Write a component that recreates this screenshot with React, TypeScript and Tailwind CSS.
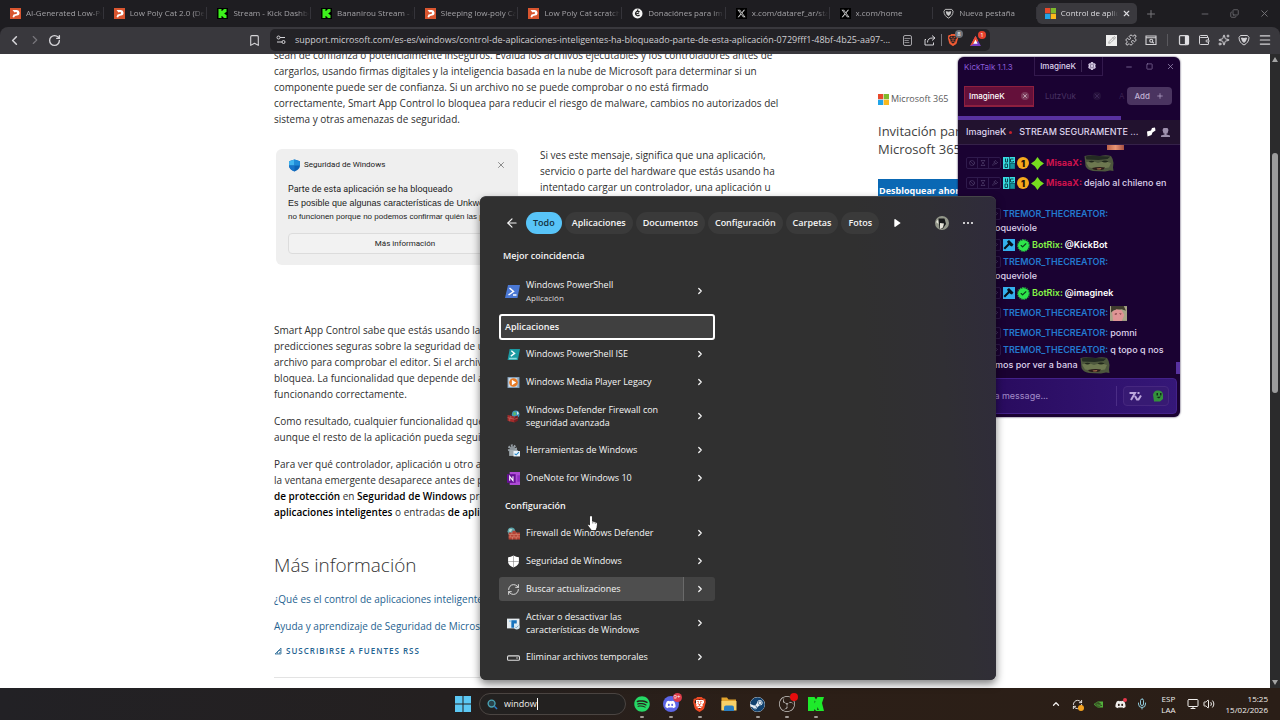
import type { ReactNode } from "react";
import {
  ArrowLeft, Bookmark, ChevronLeft, ChevronRight, ChevronUp, Copy, Menu, Mic, Minus, PanelRight, Pencil,
  Plus, Puzzle, RefreshCw, RotateCw, Settings, Sparkles, Square, Text, Volume2, Wallet, X, Ban,
  Hourglass, Gavel, Check, Monitor,
} from "lucide-react";
import { FaDiscord, FaSpotify, FaSteam, FaXTwitter } from "react-icons/fa6";
import { SiBrave, SiKick, SiNvidia, SiObsstudio } from "react-icons/si";

const segoe = "font-['Open_Sans','Noto_Sans',sans-serif]";

function MicrosoftLogo() {
  return (
    <svg viewBox="0 0 22 22" className="size-[11px] shrink-0" aria-hidden="true">
      <path fill="#e8492b" d="M0 0h10.5v10.5H0z" />
      <path fill="#7eba2c" d="M11.500 0H22v10.5H11.500z" />
      <path fill="#21a4e8" d="M0 11.500h10.5V22H0z" />
      <path fill="#fbb91c" d="M11.500 11.500H22V22H11.500z" />
    </svg>
  );
}

function CultsIcon() {
  return (
    <svg viewBox="0 0 22 22" className="size-[11px] shrink-0" aria-hidden="true">
      <path fill="#d9552f" d="M0 0h22v22H0z" />
      <path fill="#fff" d="M5 4h8a5.500 5.500 0 0 1 1 11l-4 1-2 3-3-1 2-5 5-1a2 2 0 0 0 0-4L9 9z" />
    </svg>
  );
}

function KickIcon() {
  return (
    <span className="grid size-[11px] shrink-0 place-items-center bg-black text-[#3df01c]">
      <SiKick className="size-[9px]" />
    </span>
  );
}

function DonateIcon() {
  return (
    <svg viewBox="0 0 22 22" className="size-[11px] shrink-0" aria-hidden="true">
      <circle cx="11" cy="11" r="10" fill="#f4f4f4" />
      <path d="M15 8a4.500 4.500 0 1 0 0 6M8 12l6-2M12 3l-1 3" fill="none" stroke="#222" strokeWidth="2.500" />
    </svg>
  );
}

function XIcon() {
  return (
    <span className="grid size-[11px] shrink-0 place-items-center bg-black text-[#d5d5d5]">
      <FaXTwitter className="size-[9px]" />
    </span>
  );
}

function ShieldIcon({ className }: { className: string }) {
  return (
    <svg viewBox="0 0 24 24" className={className} fill="none" stroke="currentColor" strokeWidth="2" aria-hidden="true">
      <path d="M5 3h14l3 4c0 7-4 12-10 15C6 19 2 14 2 7z" />
      <path d="M7 8l5 1 5-1-2 6-3 3-3-3z" fill="currentColor" />
    </svg>
  );
}

const tabs: { label: string; icon: ReactNode }[] = [
  { label: "AI-Generated Low-Poly", icon: <CultsIcon /> },
  { label: "Low Poly Cat 2.0 (Decor)", icon: <CultsIcon /> },
  { label: "Stream - Kick Dashboard", icon: <KickIcon /> },
  { label: "Bananirou Stream - Kick", icon: <KickIcon /> },
  { label: "Sleeping low-poly Cat", icon: <CultsIcon /> },
  { label: "Low Poly Cat scratching", icon: <CultsIcon /> },
  { label: "Donaciónes para imaginek", icon: <DonateIcon /> },
  { label: "x.com/dataref_ar/status", icon: <XIcon /> },
  { label: "x.com/home", icon: <XIcon /> },
  { label: "Nueva pestaña", icon: <ShieldIcon className="size-[11px] shrink-0 text-[#c9c9c9]" /> },
];

const fade = "[mask-image:linear-gradient(to_right,black_85%,transparent_100%)]";

function TabBar() {
  return (
    <header className="flex h-[27px] shrink-0 items-center bg-[#1e1d21] text-[8px] text-[#a3a2a6]">
      <div className="flex w-[81%] shrink-0">
        {tabs.map((tab) => (
          <button key={tab.label} className="flex h-4 min-w-0 flex-1 items-center gap-[5px] pb-px pl-[10px]">
            {tab.icon}
            <span className={`-mr-1 min-w-0 flex-1 overflow-hidden whitespace-nowrap text-left ${fade}`}>{tab.label}</span>
            <span className="h-3 w-px bg-[#35343a]" />
          </button>
        ))}
      </div>
      <div className="flex h-[21px] w-[100px] shrink-0 items-center rounded-[5px] bg-[#3a393e] pb-px pl-2 pr-[6px] text-[#dddce0]">
        <MicrosoftLogo />
        <button className={`ml-[5px] min-w-0 flex-1 overflow-hidden whitespace-nowrap text-left ${fade}`}>
          Control de aplicaciones
        </button>
        <button aria-label="Cerrar pestaña" className="ml-1"><X className="size-[9px]" strokeWidth={3} /></button>
      </div>
      <button aria-label="Nueva pestaña" className="ml-2 text-[#77767b]"><Plus className="size-3" /></button>
      <div className="ml-auto flex items-center gap-5 pr-[10px] text-[#77767b]">
        <button aria-label="Minimizar"><Minus className="size-[10px]" /></button>
        <button aria-label="Restaurar"><Copy className="size-[9px] -scale-x-100 rotate-180" /></button>
        <button aria-label="Cerrar"><X className="size-[11px]" /></button>
      </div>
    </header>
  );
}

function Toolbar() {
  return (
    <div className="shrink-0 bg-[#1e1d21]">
      <nav className="flex h-[27px] items-center rounded-t-lg bg-[#39383d] pb-px text-[#d5d4d8]">
        <div className="flex items-center gap-[6px] pl-[7px]">
          <button aria-label="Atrás"><ChevronLeft className="size-[15px]" strokeWidth={2.500} /></button>
          <button aria-label="Adelante" className="text-[#77767b]"><ChevronRight className="size-[14px]" /></button>
          <button aria-label="Recargar"><RotateCw className="size-[13px]" strokeWidth={2.500} /></button>
        </div>
        <button aria-label="Guardar marcador" className="ml-[187px]"><Bookmark className="size-[13px]" /></button>
        <div className="ml-[9px] flex h-[22px] w-[720px] shrink items-center rounded-[5px] bg-[#232226] pl-[6px] pr-2">
          <svg viewBox="0 0 20 20" className="size-[10px] shrink-0" fill="none" stroke="currentColor" strokeWidth="2" aria-hidden="true">
            <circle cx="5" cy="5" r="3" /><circle cx="15" cy="14" r="3" /><path d="M8 5h10M2 14h10" />
          </svg>
          <input
            aria-label="Dirección"
            className="ml-[9px] min-w-0 flex-1 truncate bg-transparent text-[9px] text-[#d0cfd3] outline-none"
            defaultValue="support.microsoft.com/es-es/windows/control-de-aplicaciones-inteligentes-ha-bloqueado-parte-de-esta-aplicación-0729fff1-48bf-4b25-aa97-..."
          />
          <button aria-label="Modo lectura" className="ml-2 rounded-[2px] border border-[#a5a4a8]">
            <Text className="h-[9px] w-[7px]" />
          </button>
          <button aria-label="Compartir" className="ml-3">
            <svg viewBox="0 0 24 24" className="size-3" fill="none" stroke="currentColor" strokeWidth="2">
              <path d="M4 11H2v11h17v-5M7 17q0-9 10-9h4M16 3l6 5-6 5" />
            </svg>
          </button>
          <span className="mx-[5px] h-3 w-px bg-[#77767b]" />
          <button aria-label="Brave Shields" className="relative text-[#ee5a33]">
            <SiBrave className="size-[12px]" />
            <span className="absolute -right-1 -top-1 size-2 rounded-full bg-[#6c7077] text-center text-[6px] leading-[8px] text-white">8</span>
          </button>
          <button aria-label="Brave Rewards" className="relative ml-[10px]">
            <svg viewBox="0 0 24 24" className="size-[13px]">
              <path d="M12 3 22 22H2z" fill="#7a3cc9" />
              <path d="M12 3 17 13 2 22z" fill="#ee4b2b" />
              <path d="m12 10 4 8H8z" fill="#fff" />
            </svg>
            <span className="absolute -right-1 -top-[3px] size-2 rounded-full bg-[#e5402d] text-center text-[6px] leading-[8px] text-white">1</span>
          </button>
        </div>
        <div className="ml-auto flex items-center gap-2 pr-2">
          <button aria-label="Pluma" className="grid size-[11px] place-items-center bg-[#efefef] text-[#8c8c8c]"><Pencil className="size-2" /></button>
          <button aria-label="Extensiones"><Puzzle className="size-3" /></button>
          <button aria-label="Buscar pestañas">
            <svg viewBox="0 0 24 24" className="size-3" fill="none" stroke="currentColor" strokeWidth="2.200">
              <path d="M2 4h20v17H2zM2 7.500h20M15 16l2.500 2.500" /><circle cx="12.500" cy="13.500" r="3" />
            </svg>
          </button>
          <span className="mx-[2px] h-3 w-px bg-[#5a595e]" />
          <button aria-label="Barra lateral" className="relative">
            <PanelRight className="size-3" strokeWidth={2.500} />
            <span className="absolute bottom-[2px] right-px top-[2px] w-1 bg-[#e2e1e5]" />
          </button>
          <button aria-label="Cartera"><Wallet className="size-3" /></button>
          <button aria-label="Leo"><Sparkles className="size-3" /></button>
          <button aria-label="VPN"><ShieldIcon className="size-3" /></button>
          <button aria-label="Menú"><Menu className="size-[14px]" /></button>
        </div>
      </nav>
    </div>
  );
}

function Lines({ rows }: { rows: ReactNode[] }) {
  return (
    <p className="whitespace-nowrap text-[10px] leading-4 text-[#2f2f2f] [&_b]:font-semibold [&_b]:text-black">
      {rows.map((row, i) => (
        <span key={i} className="block">{row}</span>
      ))}
    </p>
  );
}

function BlockedCard() {
  return (
    <figure className="ml-[2px] flex h-[116px] w-[242px] flex-col overflow-hidden rounded-md bg-[#efefef] px-3 pt-2 font-['Liberation_Sans',sans-serif] text-[8px] text-[#222]">
      <div className="flex h-4 items-center">
        <svg viewBox="0 0 24 24" className="size-[13px]" aria-hidden="true">
          <path d="M12 1 22 4v8c0 6-5 9-10 11C7 21 2 18 2 12V4z" fill="#0c62b4" />
          <path d="M12 1v11H2V4z" fill="#41b5ee" /><path d="M12 1v11h10V4z" fill="#1f8bd8" /><path d="M12 12v11C7 21 2 18 2 12z" fill="#1874c8" />
        </svg>
        <span className="ml-[3px] font-['Roboto',sans-serif]">Seguridad de Windows</span>
        <X className="ml-auto size-[10px] text-[#777]" />
      </div>
      <div className="mt-[9px] whitespace-nowrap leading-[14px]">
        <p className="font-['Roboto',sans-serif] text-[9px]">Parte de esta aplicación se ha bloqueado</p>
        <p className="text-[9px]">Es posible que algunas características de Unkwown</p>
        <p>no funcionen porque no podemos confirmar quién las publicó</p>
      </div>
      <button className="-mr-4 mt-[9px] h-[21px] rounded-sm border border-[#dcdcdc] bg-[#f2f2f2] font-['Roboto',sans-serif]">Más información</button>
    </figure>
  );
}

function Page() {
  return (
    <main className="flex min-h-0 flex-1 overflow-hidden bg-white">
      <div className="min-w-0 flex-1 overflow-hidden">
        <div className="mx-auto -mt-[7px] flex w-[722px]">
          <article className="w-[510px]">
            <Lines rows={[
              "sean de confianza o potencialmente inseguros. Evalúa los archivos ejecutables y los controladores antes de",
              "cargarlos, usando firmas digitales y la inteligencia basada en la nube de Microsoft para determinar si un",
              "componente puede ser de confianza. Si un archivo no se puede comprobar o no está firmado",
              "correctamente, Smart App Control lo bloquea para reducir el riesgo de malware, cambios no autorizados del",
              "sistema y otras amenazas de seguridad.",
            ]} />
            <div className="mt-[22px] flex">
              <BlockedCard />
              <div className="ml-[22px] -mt-[2px]">
                <Lines rows={[
                  "Si ves este mensaje, significa que una aplicación,",
                  "servicio o parte del hardware que estás usando ha",
                  "intentado cargar un controlador, una aplicación u",
                ]} />
              </div>
            </div>
            <div className="mt-[57px] flex flex-col gap-[11px]">
              <Lines rows={[
                "Smart App Control sabe que estás usando la nube",
                "predicciones seguras sobre la seguridad de una",
                "archivo para comprobar el editor. Si el archivo no",
                "bloquea. La funcionalidad que depende del archivo",
                "funcionando correctamente.",
              ]} />
              <Lines rows={[
                "Como resultado, cualquier funcionalidad que dependa",
                "aunque el resto de la aplicación pueda seguir",
              ]} />
              <Lines rows={[
                "Para ver qué controlador, aplicación u otro archivo",
                "la ventana emergente desaparece antes de poder",
                <><b>de protección</b> en <b>Seguridad de Windows</b> programa</>,
                <><b>aplicaciones inteligentes</b> o entradas <b>de aplicación</b></>,
              ]} />
            </div>
            <h2 className="mt-8 text-[19px] font-light leading-[26px] text-[#333]">Más información</h2>
            <div className="mt-[13px] flex flex-col items-start gap-[11px] whitespace-nowrap text-[10px] leading-4 text-[#1f6391]">
              <a href="#control">¿Qué es el control de aplicaciones inteligentes?</a>
              <a href="#ayuda">Ayuda y aprendizaje de Seguridad de Microsoft</a>
              <a href="#rss" className="-mt-[2px] flex items-center gap-1 text-[8px] font-semibold tracking-[1px]">
                <svg viewBox="0 0 16 16" className="size-2" fill="none" stroke="currentColor" strokeWidth="1.500">
                  <path d="M2 14 14 2v12zM6 14a8 8 0 0 1 8-8M10 14a4 4 0 0 1 4-4" />
                </svg>
                SUSCRIBIRSE A FUENTES RSS
              </a>
            </div>
            <hr className="mt-[18px] border-[#e3e3e3]" />
          </article>
          <aside className="ml-[94px] w-[118px] whitespace-nowrap pt-11">
            <p className="flex h-4 items-center gap-[2px] text-[9px] font-medium text-[#5a5a5a]"><MicrosoftLogo />Microsoft 365</p>
            <h3 className="mt-[15px] text-[13px] leading-[18px] text-[#3f3f3f]">Invitación para probar<br />Microsoft 365 gratis</h3>
            <button className="mt-[21px] h-6 bg-[#0a68b4] px-px text-[9px] font-bold text-white">Desbloquear ahora</button>
          </aside>
        </div>
      </div>
      <div className="flex w-[10px] shrink-0 flex-col items-center justify-between bg-[#2b2b2c] py-[3px]" aria-hidden="true">
        <span className="size-0 border-x-[3px] border-b-[5px] border-x-transparent border-b-[#a4a4a4]" />
        <span className="mb-auto mt-[91px] h-[240px] w-[6px] rounded-full bg-[#9c9c9c]" />
        <span className="size-0 border-x-[3px] border-t-[5px] border-x-transparent border-t-[#a4a4a4]" />
      </div>
    </main>
  );
}

function ModButtons() {
  return (
    <span className="mr-[2px] flex h-3 shrink-0 divide-x divide-[#2f1a4c] rounded-[2px] border border-[#2f1a4c] text-[#5d4f78]">
      <button aria-label="Banear" className="grid w-[11px] place-items-center"><Ban className="size-[6px]" /></button>
      <button aria-label="Suspender" className="grid w-[11px] place-items-center"><Hourglass className="size-[6px]" /></button>
      <button aria-label="Moderar" className="grid w-[11px] place-items-center"><Gavel className="size-[6px]" /></button>
    </span>
  );
}

function Frog() {
  return (
    <svg viewBox="0 0 60 34" className="ml-[2px] h-[17px] w-[30px] shrink-0" role="img" aria-label="emote">
      <path d="M1 2Q10 0 18 1l14 1q12-3 22 0 4 5 5 14l-1 9 1 7-7-1-10 2-24-1Q6 30 3 22z" fill="#4d573d" />
      <path d="M3 3q12-3 23-1l27 1-6 5-18 2L5 9z" fill="#232b22" />
      <path d="M4 15q12-4 24 1 12-5 26 0l-4 9-20 3-20-3z" fill="#6d7850" />
      <path d="M9 13q6-3 12 0-6 4-12 0m26 0q7-4 14 0-7 4-14 0" fill="#20271b" />
      <path d="M16 26q13-3 26-1l-3 4q-11 2-20 0z" fill="#2a1b19" /><path d="m25 27 10-1-2 3h-6z" fill="#a66a4c" />
    </svg>
  );
}

function MisaaBadges() {
  return (
    <>
      <svg viewBox="0 0 24 24" className="size-3" aria-hidden="true">
        <path fill="#38dbe0" d="M0 0h24v24H0z" />
        <path d="M5 3v7h4V3M4 14h5v7H4zM21 4h-6v6h6V8" fill="none" stroke="#0a4651" strokeWidth="2" /><path d="M13 0v24M14 13h10v11H14z" stroke="#0f6973" fill="#1692a0" strokeWidth="2" />
      </svg>
      <span className="ml-[2px] grid size-3 place-items-center rounded-full bg-[#f5a91d] text-[9px] font-black text-[#23140b]">1</span>
      <svg viewBox="0 0 24 24" className="ml-[2px] mr-[2px] size-[13px]" aria-hidden="true"><path fill="#76dc1f" d="m12 0 5 7 7 5-7 5-5 7-5-7-7-5 7-5z" /></svg>
    </>
  );
}

function BotBadges() {
  return (
    <>
      <svg viewBox="0 0 24 24" className="size-3" aria-hidden="true">
        <path fill="#35b1ee" d="M0 0h24v24H0z" />
        <path fill="#07101a" d="m8 5 4-3 9 9-3 4-3-1-2-2-9 9-3-3 9-9z" />
      </svg>
      <span className="ml-[3px] mr-[3px] grid size-[11px] place-items-center rounded-full bg-[#2ee64b] text-[#0b431a] outline-1 outline-dotted outline-[#2ee64b]">
        <Check className="size-[7px]" strokeWidth={4} />
      </span>
    </>
  );
}

function Line({ className, children }: { className: string; children: ReactNode }) {
  return <div className={`flex items-center whitespace-nowrap ${className}`}>{children}</div>;
}

const Tremor = () => <b className="font-semibold text-[#2379cf]">TREMOR_THECREATOR:</b>;
const Misaa = () => <b className="font-bold text-[#cb134d]">MisaaX:</b>;
const Bot = () => <b className="font-semibold text-[#86f547]">BotRix:</b>;

function KickTalk() {
  return (
    <section
      aria-label="KickTalk"
      className="absolute left-[958px] top-[57px] flex w-[222px] flex-col overflow-hidden rounded-md bg-[#1a0232] font-['Inter',sans-serif] text-[9px] text-[#ded3ec] shadow-[0_0_2px_#12002a]"
    >
      <div className="flex h-[19px] items-center pl-[6px] pr-[5px]">
        <span className="text-[8px] text-[#8b5bd8]">KickTalk 1.1.3</span>
        <span className="ml-auto flex h-full items-center divide-x divide-[#3d2754] border border-t-0 border-[#33194d] text-[8px] font-medium">
          <button className="px-[5px]">ImagineK</button>
          <button aria-label="Ajustes" className="px-[6px]"><Settings className="size-2" strokeWidth={4} /></button>
        </span>
        <span className="ml-[22px] flex items-center gap-[13px] text-[#9c8cb5]">
          <button aria-label="Minimizar"><Minus className="size-2" /></button>
          <button aria-label="Maximizar"><Square className="size-[7px]" /></button>
          <button aria-label="Cerrar"><X className="size-[9px]" /></button>
        </span>
      </div>
      <div className="flex h-10 items-center pl-[6px] pr-2">
        <div className="flex h-[21px] w-[70px] items-center justify-between border border-b-2 border-[#8e1f3f] bg-[#64103a] px-1 text-[8px] font-medium text-white">
          <button>ImagineK</button>
          <button aria-label="Cerrar ImagineK" className="rounded-sm bg-[#7c3a5b] p-px"><X className="size-[6px]" /></button>
        </div>
        <div className="ml-[11px] flex w-14 items-center justify-between text-[8px] text-[#493263]">
          <button>LutzVuk</button>
          <button aria-label="Cerrar LutzVuk" className="rounded-sm bg-[#25103b]"><X className="size-2" /></button>
        </div>
        <span className="ml-auto text-[8px] text-[#38204f]">A</span>
        <button className="ml-[2px] flex h-[18px] items-center gap-[6px] rounded-sm bg-[#4a3460] px-2 text-[8px] font-medium text-[#c0b1d2]">
          Add <Plus className="size-[8px]" />
        </button>
      </div>
      <div className="h-1 w-[163px] bg-[#5831a0]" />
      <div className="flex h-[25px] items-center border-b border-[#352149] bg-[#22122f] px-2 font-medium">
        <span>ImagineK</span>
        <span className="ml-[3px] size-[3px] rounded-full bg-[#c5202b]" />
        <span className="ml-[7px]">STREAM SEGURAMENTE ...</span>
        <svg viewBox="0 0 20 20" className="ml-auto size-[10px]" aria-label="Fijado"><path fill="#fff" d="M2 9 10 7l2-5 6-1 1 6-6 4-2 5-8 3z" /></svg>
        <svg viewBox="0 0 18 18" className="ml-[5px] mr-[2px] size-[9px]" fill="#9d8fac" aria-label="Espectadores"><path d="M5 0h8l2 4-2 7H5L3 4zM7 10h4v3l7 2v3H0v-3l7-2z" /></svg>
      </div>
      <div className="relative flex flex-col gap-px overflow-hidden px-2 pb-[5px] font-medium">
        <div className="flex h-[7px] items-start pl-[141px]"><span className="h-[5px] w-[17px] bg-[linear-gradient(90deg,#b96249,#e99574,#a54f42)]" /></div>
        <Line className="h-5"><ModButtons /><MisaaBadges /><Misaa /><Frog /></Line>
        <div className="pb-[2px]">
          <Line className="h-[18px]"><ModButtons /><MisaaBadges /><Misaa /><span className="pl-[2px]">dejalo al chileno en</span></Line>
          <Line className="h-3">paz</Line>
        </div>
        {[0, 1].map((n) => (
          <div key={n} className="flex flex-col gap-px">
            <div>
              <Line className="h-[14px]"><ModButtons /><Tremor /></Line>
              <Line className="h-[14px] pl-[29px]">oqueviole</Line>
            </div>
            <Line className="h-[18px]">
              <ModButtons /><BotBadges /><Bot />
              <span className="pl-[2px] font-semibold text-white">{n === 0 ? "@KickBot" : "@imaginek"}</span>
            </Line>
          </div>
        ))}
        <Line className="h-5">
          <ModButtons /><Tremor />
          <svg viewBox="0 0 32 28" className="ml-[2px] h-[15px] w-[17px]" role="img" aria-label="emote">
            <path fill="#a8a587" d="M0 0h32v28H0z" /><path fill="#3e3a2d" d="M2 0h24l4 9-8-3L7 8 2 12z" />
            <path fill="#df9495" d="m4 11 8-5 10 2 5 9-5 11H6z" /><path fill="#8c4c50" d="m9 14 4-1v3l-4 1zm8-1 5 1-2 3z" />
          </svg>
        </Line>
        <Line className="h-[18px]"><ModButtons /><Tremor /><span className="pl-[2px]">pomni</span></Line>
        <div>
          <Line className="h-[14px]"><ModButtons /><Tremor /><span className="pl-[2px]">q topo q nos</span></Line>
          <Line className="h-4 pl-[29px]">mos por ver a bana<Frog /></Line>
        </div>
        <span className="absolute bottom-1 right-0 h-3 w-1 bg-[#5831a0]" />
      </div>
      <form className="mx-[3px] mb-[3px] flex h-9 items-center rounded-sm border border-[#43218a] bg-[linear-gradient(90deg,#27095a,#351778)] pl-2 pr-[7px]" onSubmit={(e) => e.preventDefault()}>
        <input aria-label="Mensaje" placeholder="Send a message..." className="min-w-0 flex-1 bg-transparent outline-none placeholder:text-[#a28bc8]" />
        <span className="mr-[6px] h-5 w-px bg-[#4b2d86]" />
        <div className="flex h-5 w-[46px] items-center justify-around rounded-sm border border-[#46277f] bg-[#371a73]">
          <button type="button" aria-label="7TV">
            <svg viewBox="0 0 26 20" className="h-[10px] w-[13px]" fill="none" stroke="#bca7dc" strokeWidth="4"><path d="M1 4h11L4 18M12 10l4 7h3l5-8M17 4h4" /></svg>
          </button>
          <button type="button" aria-label="Emotes">
            <svg viewBox="0 0 20 24" className="h-3 w-[10px]"><path fill="#34923c" d="M0 9Q3 0 10 1q9 0 10 8v9l-6 5H2z" /><path fill="#102d18" d="M7 6h3v5H7zm7 0h3v5h-3zM7 14l9-1-4 4z" /></svg>
          </button>
        </div>
      </form>
    </section>
  );
}

const icon = "size-[13px] shrink-0";

type Result = { label: ReactNode; tall?: boolean; active?: boolean; icon: ReactNode };

const apps: Result[] = [
  {
    label: "Windows PowerShell ISE",
    icon: (
      <svg viewBox="0 0 24 24" className={icon}>
        <path fill="#1b9aa2" d="M5 2h19l-4 20H1z" /><path d="m8 5 6 5-7 5" fill="none" stroke="#fff" strokeWidth="2.500" /><path fill="#8adcdf" d="M4 18h14v3H4z" />
      </svg>
    ),
  },
  {
    label: "Windows Media Player Legacy",
    icon: (
      <svg viewBox="0 0 24 24" className={icon}>
        <path fill="#8aa9c6" d="M1 2h22v20H1z" /><path fill="#d6e0e8" d="M3 4h16v16H3z" /><circle cx="12" cy="12" r="8" fill="#e77a25" /><path fill="#fff" d="m9 7 8 5-8 5z" />
      </svg>
    ),
  },
  {
    label: <>Windows Defender Firewall con<br />seguridad avanzada</>,
    tall: true,
    icon: (
      <svg viewBox="0 0 24 24" className={icon}>
        <circle cx="16" cy="8" r="7" fill="#3a96bd" /><path fill="#61b863" d="m12 3 5 2-1 4-4 1z" /><path fill="#d9edf0" d="m18 2 4 4-3 3z" />
        <path fill="#a32c2b" d="m1 9 13 3v11L1 20z" /><path fill="#7c1c20" d="m14 12 6-2v10l-6 3z" /><path d="m1 14 13 3 6-2M7 11v5M5 15v6" fill="none" stroke="#cf7770" />
      </svg>
    ),
  },
  {
    label: "Herramientas de Windows",
    icon: (
      <svg viewBox="0 0 24 24" className={icon}>
        <circle cx="10" cy="9" r="6" fill="none" stroke="#969fa5" strokeWidth="5" strokeDasharray="3 2" /><circle cx="10" cy="9" r="5" fill="#8a9298" />
        <path fill="#9fa9ae" d="M4 11h16v11H4z" /><path fill="#eaf4fa" d="M12 13h12v10H12z" /><path d="m14 18 3 2 5-5" fill="none" stroke="#2388cb" strokeWidth="2" />
      </svg>
    ),
  },
  {
    label: "OneNote for Windows 10",
    icon: (
      <svg viewBox="0 0 24 24" className={icon}>
        <path fill="#ae4bd5" d="M5 0h19v24H5z" /><path fill="#8f2fc2" d="M19 6h5v12h-5z" /><path fill="#661095" d="M0 4h16v16H0z" /><path d="M5 16V8l6 8V8" fill="none" stroke="#fff" strokeWidth="2" />
      </svg>
    ),
  },
];

const settings: Result[] = [
  {
    label: "Firewall de Windows Defender",
    icon: (
      <svg viewBox="0 0 24 24" className={icon}>
        <circle cx="8" cy="8" r="7" fill="#5aa3a9" /><path fill="#b9d7d1" d="m5 3 5 1-3 5-4-1z" /><path fill="#b54235" d="M3 10h7V7h6v3h8v13H3z" />
        <path d="M3 14h21M3 18.500h21M9 10v4M17 10v4M13 14v4.500M20 14v4.500M6 14v4.500M10 18.500V23M17 18.500V23" stroke="#e39b83" />
      </svg>
    ),
  },
  {
    label: "Seguridad de Windows",
    icon: (
      <svg viewBox="0 0 24 24" className={icon}>
        <path fill="#fff" d="M12 1q5 3 10 3v8c0 6-5 9-10 11C7 21 2 18 2 12V4q5 0 10-3" /><path d="M12 1v22M2 12h20" stroke="#777" />
      </svg>
    ),
  },
  { label: "Buscar actualizaciones", active: true, icon: <RefreshCw className="size-[13px] shrink-0 text-[#ddd]" strokeWidth={1.800} /> },
  {
    label: <>Activar o desactivar las<br />características de Windows</>,
    tall: true,
    icon: (
      <svg viewBox="0 0 24 24" className={icon}>
        <path fill="#e6edf1" d="M0 3h23v18H0z" /><path fill="#1673bd" d="M8 6h10v6h-5v8H8z" /><path fill="#91c9eb" d="M4 6h3v3H4z" />
        <circle cx="18" cy="18" r="5" fill="#d5e8f3" /><path d="m15 18 2 2 4-4" fill="none" stroke="#6f9bb9" strokeWidth="1.500" />
      </svg>
    ),
  },
  {
    label: "Eliminar archivos temporales",
    icon: (
      <svg viewBox="0 0 24 24" className={icon} fill="none" stroke="#ddd" strokeWidth="2"><rect x="1" y="9" width="22" height="8" rx="2" /><path d="M17 13h3" /></svg>
    ),
  },
];

function ResultRow({ item }: { item: Result }) {
  return (
    <li className={`flex py-[2px] ${item.tall ? "h-10" : "h-7"}`}>
      <button className={`flex flex-1 items-center gap-[6px] rounded-l-[3px] pl-2 text-left leading-[13px] ${item.active ? "bg-[#4e4e4e]" : ""}`}>
        {item.icon}
        <span className="pb-px">{item.label}</span>
      </button>
      <button
        aria-label="Más opciones"
        className={`grid w-8 place-items-center rounded-r-[3px] border-l ${item.active ? "border-[#6a6a6a] bg-[#424242]" : "border-transparent"}`}
      >
        <ChevronRight className="size-[10px]" strokeWidth={3} />
      </button>
    </li>
  );
}

const chips = ["Aplicaciones", "Documentos", "Configuración", "Carpetas", "Fotos"];

function StartMenu() {
  return (
    <section
      aria-label="Búsqueda"
      className="absolute bottom-10 left-[480px] w-[516px] rounded-md border-t border-[#454547] bg-[#303030] bg-[linear-gradient(265deg,#2f2b3b_0%,#302f34_12%,#303030_26%)] px-[19px] pb-[9px] text-[9px] font-medium text-[#f5f5f5] shadow-[0_4px_8px_rgba(0,0,0,0.5)]"
    >
      <div className="flex h-[45px] items-center pt-[6px] font-semibold">
        <button aria-label="Volver" className="ml-[6px] mr-[7px]"><ArrowLeft className="size-[14px]" /></button>
        <div className="flex gap-[3px] [&>button]:h-[22px] [&>button]:rounded-full [&>button]:px-[7px]">
          <button className="bg-[#58c4f8] text-[#123040]">Todo</button>
          {chips.map((chip) => <button key={chip} className="bg-[#3a3a3a]">{chip}</button>)}
        </div>
        <button aria-label="Más categorías" className="ml-[15px]"><svg viewBox="0 0 8 10" className="h-2 w-[7px]"><path fill="#fff" d="M0 1q0-1 1-1l7 5-7 5q-1 0-1-1z" /></svg></button>
        <button aria-label="Cuenta" className="ml-auto">
          <svg viewBox="0 0 28 28" className="size-[14px]"><circle cx="14" cy="14" r="14" fill="#93978a" /><path fill="#17191a" d="M7 5h12l3 11-6 9H9z" /><path fill="#e5e4d9" d="m10 14 8 1-2 8-6 3zM2 12l4-5 1 9z" /></svg>
        </button>
        <button aria-label="Opciones" className="ml-[14px] mr-1 flex gap-[2px]">
          <i className="size-[2px] rounded-full bg-white" /><i className="size-[2px] rounded-full bg-white" /><i className="size-[2px] rounded-full bg-white" />
        </button>
      </div>
      <div className="w-[216px]">
        <h2 className="flex h-7 items-center pb-px pl-1 font-semibold">Mejor coincidencia</h2>
        <div className="flex h-[44px] items-center pb-[2px]">
          <button className="flex flex-1 items-center gap-[6px] pl-[6px] text-left">
            <svg viewBox="0 0 30 26" className="h-[13px] w-[15px] shrink-0"><path fill="#4a78d4" d="M6 0h24l-5 26H0z" /><path d="m9 6 8 7-10 7M16 20h7" fill="none" stroke="#fff" strokeWidth="3" /></svg>
            <span className="leading-[13px]">Windows PowerShell<span className="block text-[8px] font-normal text-[#ddd]">Aplicación</span></span>
          </button>
          <button aria-label="Más opciones" className="grid w-8 place-items-center border-l border-transparent"><ChevronRight className="size-[10px]" strokeWidth={3} /></button>
        </div>
        <h2 className="flex h-[26px] items-center rounded-[3px] border-2 border-white bg-[#404040] pl-1 font-semibold">Aplicaciones</h2>
        <ul>{apps.map((item, i) => <ResultRow key={i} item={item} />)}</ul>
        <h2 className="flex h-[27px] items-center pl-[6px] font-semibold">Configuración</h2>
        <ul>{settings.map((item, i) => <ResultRow key={i} item={item} />)}</ul>
      </div>
    </section>
  );
}

const dock: { name: string; open: boolean; icon: ReactNode }[] = [
  { name: "Spotify", open: true, icon: <FaSpotify className="size-4 text-[#25d865]" /> },
  {
    name: "Discord",
    open: true,
    icon: (
      <span className="relative grid size-4 place-items-center rounded-full bg-[#5b65e6] text-white">
        <FaDiscord className="size-[11px]" />
        <span className="absolute -right-[3px] -top-[3px] h-[9px] w-[9px] rounded-full bg-[#dc3b4b] text-center text-[6px] leading-[9px]">9+</span>
      </span>
    ),
  },
  {
    name: "Brave",
    open: true,
    icon: <span className="relative grid place-items-center text-[#ef4a25]"><span className="absolute size-2 bg-white" /><SiBrave className="relative size-[15px]" /></span>,
  },
  {
    name: "Explorador",
    open: false,
    icon: (
      <svg viewBox="0 0 32 32" className="size-4"><path fill="#e2a32d" d="M1 3h11l3 4h15v21H1z" /><path fill="#f8d168" d="M1 10h30v19H1z" /><path fill="#2a7fc1" d="M6 23q0-4 4-4h12q4 0 4 4v7H6z" /></svg>
    ),
  },
  { name: "Steam", open: true, icon: <span className="grid size-[15px] place-items-center overflow-hidden rounded-full bg-[#e6edf3]"><FaSteam className="size-[15px] text-[#12426f]" /></span> },
  {
    name: "OBS",
    open: true,
    icon: <span className="relative"><SiObsstudio className="size-4 text-[#c9c7c4]" /><span className="absolute -right-[3px] -top-[3px] size-2 rounded-full bg-[#e60d0d]" /></span>,
  },
  {
    name: "KickTalk",
    open: true,
    icon: <svg viewBox="0 0 32 28" className="h-[14px] w-4"><path fill="#1eea2b" d="M0 0h13l3 5 3-5h13l-4 12 4 16H16l-3-4-1 4H0z" /><path fill="#125b18" d="m13 7 2 2-2 4zM19 20l3 6h-4z" /></svg>,
  },
];

function Taskbar() {
  return (
    <footer className="relative flex h-8 shrink-0 items-center bg-[linear-gradient(90deg,#222125_0%,#242020_35%,#2c1f17_60%,#2a1e17_100%)] text-[#f0eeec]">
      <button aria-label="Inicio" className="ml-[455px]">
        <svg viewBox="0 0 32 32" className="size-4"><path fill="#5cc8f4" d="M0 0h15v15H0zM17 0h15v15H17zM0 17h15v15H0zM17 17h15v15H17z" /></svg>
      </button>
      <label className="ml-2 flex h-[22px] w-[147px] items-center rounded-full border border-[#4b4542] bg-[#232120] pl-[7px] text-[9px] font-medium">
        <svg viewBox="0 0 24 24" className="mr-[6px] size-[11px]" fill="none" strokeWidth="3"><circle cx="10" cy="10" r="7.500" stroke="#4aa3b4" fill="#28434c" /><path d="m16 16 6 6" stroke="#2d7fd0" /></svg>
        <input aria-label="Buscar" defaultValue="window" className="field-sizing-content bg-transparent outline-none" />
        <span className="h-3 w-px bg-white" />
      </label>
      <div className="ml-px flex">
        {dock.map((app) => (
          <button key={app.name} aria-label={app.name} className="relative grid h-8 w-[29px] place-items-center">
            {app.icon}
            {app.open && <span className="absolute bottom-[2px] h-[2px] w-1 rounded-full bg-[#a39d98]" />}
          </button>
        ))}
      </div>
      <div className="ml-auto flex items-center pr-3 text-[8px] leading-[11px]">
        <button aria-label="Iconos ocultos"><ChevronUp className="size-[10px]" strokeWidth={3} /></button>
        <button aria-label="Actualizaciones" className="relative ml-[11px]"><RefreshCw className="size-[11px]" /><i className="absolute -bottom-px -right-px size-[6px] rounded-full bg-[#f3a11f]" /></button>
        <button aria-label="NVIDIA" className="ml-[11px] text-[#52b13c]"><SiNvidia className="size-[9px]" /></button>
        <button aria-label="Discord" className="relative ml-3"><FaDiscord className="size-[11px]" /><i className="absolute -right-px -top-px size-1 rounded-full bg-[#e8384c]" /></button>
        <button aria-label="Micrófono" className="ml-[10px] text-[#8ec7d8]"><Mic className="size-3" /></button>
        <button className="ml-[13px] text-center">ESP<br />LAA</button>
        <button aria-label="Red" className="ml-[11px]"><Monitor className="size-3" /></button>
        <button aria-label="Volumen" className="ml-1"><Volume2 className="size-3" /></button>
        <time className="ml-[11px] text-right">15:25<br />15/02/2026</time>
      </div>
    </footer>
  );
}

export default function App() {
  return (
    <div className={`relative flex h-screen flex-col overflow-hidden ${segoe}`}>
      <TabBar />
      <Toolbar />
      <Page />
      <Taskbar />
      <KickTalk />
      <StartMenu />
      <svg viewBox="0 0 22 32" className="absolute left-[587px] top-[515px] h-4 w-[11px]" aria-hidden="true">
        <path d="M8 1q3 0 3 3v8l7 2q3 1 3 4l-1 7-2 6H9l-7-9q-2-3 0-4l3 2V4q0-3 3-3z" fill="#fff" stroke="#111" strokeWidth="1.500" />
        <path d="M11 12v5M14 13v4M17 14v4" stroke="#555" />
      </svg>
    </div>
  );
}
